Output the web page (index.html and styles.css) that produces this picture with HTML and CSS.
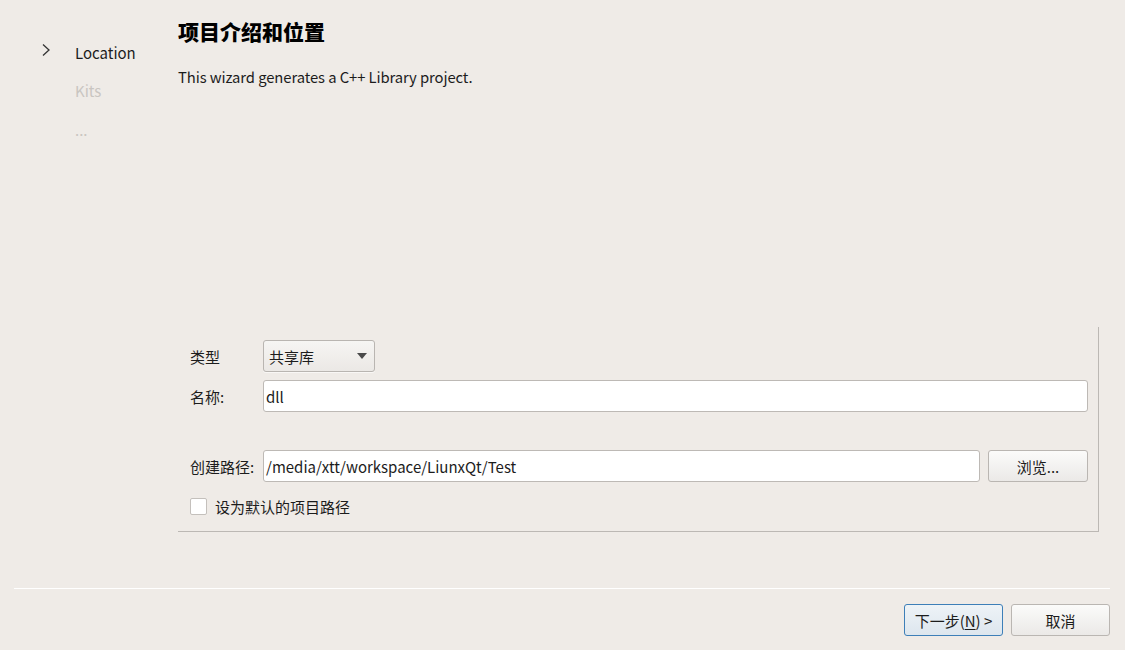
FILE: index.html
```html
<!DOCTYPE html>
<html lang="zh-CN">
<head>
<meta charset="utf-8">
<title>Wizard</title>
<link rel="stylesheet" href="styles.css">
</head>
<body>
<div class="wizard">
  <div class="main">
    <nav class="sidebar">
      <div class="step current">
        <svg class="chev" width="10" height="14" viewBox="0 0 10 14"><path d="M2 1.5 L8 7 L2 12.5" fill="none" stroke="#333" stroke-width="1.3"/></svg>
        <span>Location</span>
      </div>
      <div class="step"><span>Kits</span></div>
      <div class="step"><span>...</span></div>
    </nav>
    <section class="content">
      <h1 class="title">项目介绍和位置</h1>
      <p class="desc">This wizard generates a C++ Library project.</p>
      <div class="spacer"></div>
      <div class="group">
        <div class="row">
          <label class="lbl">类型</label>
          <div class="combo"><span>共享库</span><span class="arrow"></span></div>
        </div>
        <div class="row row-name">
          <label class="lbl">名称:</label>
          <div class="field grow">dll</div>
        </div>
        <div class="row row-path">
          <label class="lbl">创建路径:</label>
          <div class="field grow">/media/xtt/workspace/LiunxQt/Test</div>
          <button class="btn browse">浏览...</button>
        </div>
        <div class="row row-check">
          <span class="checkbox"></span>
          <span class="check-lbl">设为默认的项目路径</span>
        </div>
      </div>
    </section>
  </div>
  <div class="sep"></div>
  <div class="buttons">
    <button class="btn primary">下一步(<u>N</u>) &gt;</button>
    <button class="btn">取消</button>
  </div>
</div>
</body>
</html>
```

FILE: styles.css
```css
html, body {
  margin: 0;
  padding: 0;
  background: #efebe7;
}
body {
  font-family: "Noto Sans CJK SC", "Noto Sans", sans-serif;
  font-size: 15px;
  color: #1c1c1c;
}
.wizard {
  width: 1125px;
  height: 650px;
  display: flex;
  flex-direction: column;
}
.main {
  display: flex;
  height: 588px;
}
.sidebar {
  width: 178px;
  flex: none;
  padding-top: 41px;
  box-sizing: border-box;
}
.step {
  display: flex;
  align-items: center;
  height: 22px;
  margin-bottom: 17px;
  padding-left: 75px;
  position: relative;
  color: #c9c5c1;
}
.step.current {
  color: #1c1c1c;
  margin-bottom: 16px;
}
.chev {
  position: absolute;
  left: 41px;
  top: 2px;
}
.content {
  flex: 1;
  display: flex;
  flex-direction: column;
  padding-right: 26px;
  padding-bottom: 56px;
}
.title {
  margin: 17px 0 0 0;
  font-size: 21px;
  font-weight: 900;
  line-height: 28px;
  color: #000;
}
.desc {
  margin: 21px 0 0 0;
  line-height: 22px;
  font-size: 14.8px;
  letter-spacing: -0.08px;
}
.spacer {
  flex: 1;
}
.group {
  border-right: 1px solid #bcb8b4;
  border-bottom: 1px solid #bcb8b4;
  padding: 13px 10px 16px 12px;
  display: flex;
  flex-direction: column;
  height: 205px;
  box-sizing: border-box;
}
.row {
  display: flex;
  align-items: center;
  height: 32px;
}
.row-name {
  margin-top: 8px;
}
.row-path {
  margin-top: 38px;
}
.row-check {
  margin-top: 15px;
  height: 18px;
}
.lbl {
  width: 73px;
  flex: none;
}
.combo {
  width: 112px;
  height: 32px;
  box-sizing: border-box;
  border: 1px solid #b9b5b1;
  border-radius: 3px;
  background: linear-gradient(#f6f5f3, #ebe8e5);
  display: flex;
  align-items: center;
  justify-content: space-between;
  padding: 0 6px 0 5px;
  box-shadow: 0 1px 0 rgba(255,255,255,0.6);
}
.arrow {
  width: 0;
  height: 0;
  border-left: 5px solid transparent;
  border-right: 5px solid transparent;
  border-top: 6px solid #4a4a4a;
  margin-right: 1px;
}
.field {
  height: 32px;
  box-sizing: border-box;
  background: #fff;
  border: 1px solid #bdb9b5;
  border-radius: 3px;
  padding: 0 2px;
  display: flex;
  align-items: center;
}
.grow {
  flex: 1;
}
.btn {
  font-family: inherit;
  font-size: 15px;
  color: #1c1c1c;
  width: 100px;
  height: 32px;
  box-sizing: border-box;
  border: 1px solid #bab6b2;
  border-radius: 3px;
  background: linear-gradient(#fbfbfa, #ebe9e7);
  padding: 0;
}
.browse {
  margin-left: 8px;
}
.checkbox {
  width: 17px;
  height: 17px;
  box-sizing: border-box;
  border: 1px solid #c4c0bc;
  border-radius: 2px;
  background: #fff;
  margin-right: 8px;
  flex: none;
}
.sep {
  height: 0;
  border-top: 1px solid #fff;
  margin: 0 15px 0 14px;
}
.buttons {
  display: flex;
  justify-content: flex-end;
  gap: 8px;
  padding: 15px 15px 0 0;
}
.buttons .btn {
  width: 99px;
}
.btn.primary {
  border-color: #3d7fb8;
  background: linear-gradient(#eef3f7, #dde6ee);
}
.btn u {
  text-underline-offset: 2px;
}
```
